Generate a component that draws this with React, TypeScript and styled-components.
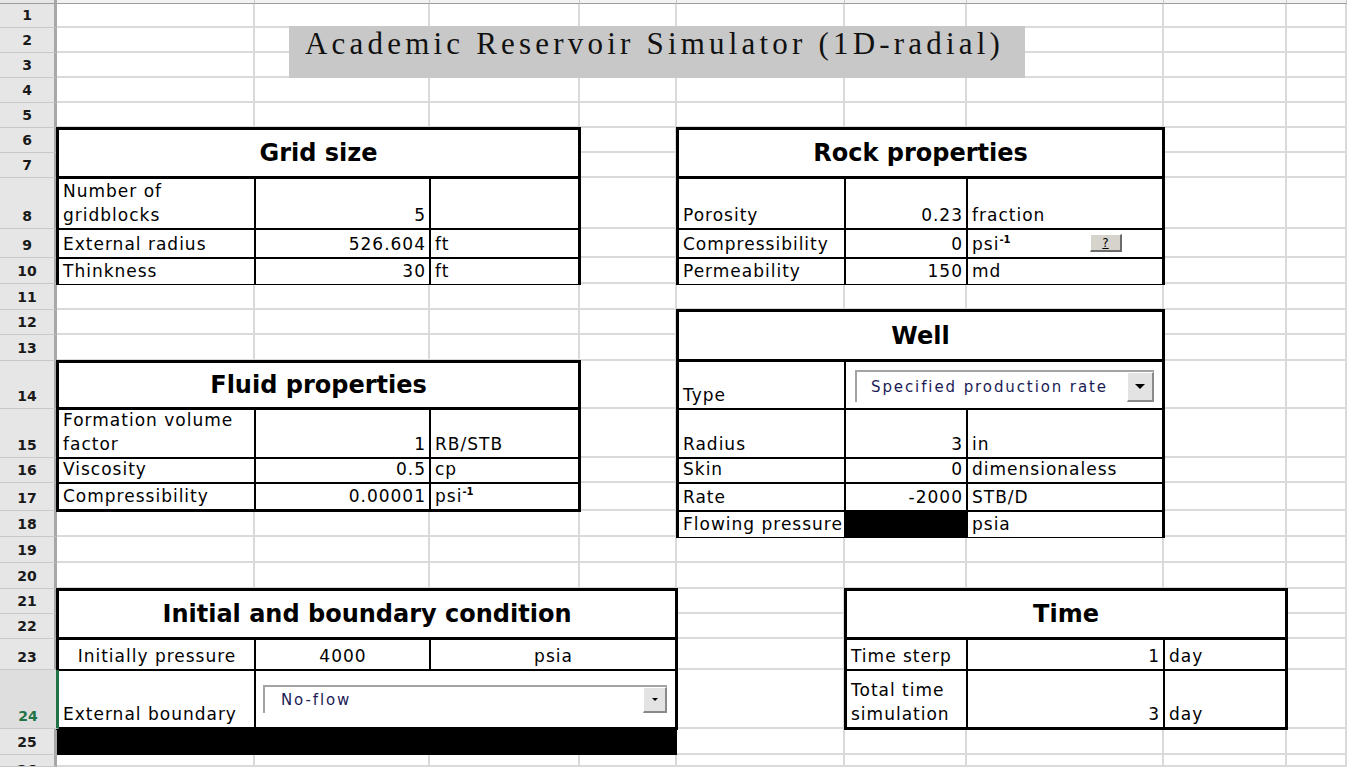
import React from 'react';
import styled, { createGlobalStyle } from 'styled-components';

const GlobalStyle = createGlobalStyle`
  html, body { margin: 0; padding: 0; overflow: hidden; background: #fff; }
  #root { width: 1347px; height: 767px; }
  * { box-sizing: border-box; }
`;

const COLS = [57, 198, 175, 150, 97, 168, 122, 197, 123];
const ROWS = [4, 24, 25, 25, 25, 25, 25, 25, 51, 29, 26, 26, 25, 26, 48, 49, 25, 28, 26, 26, 26, 25, 25, 31, 59, 26];

const tracks = (s: number[]) =>
  [s[0] - 3, ...s.slice(1, -1).map((v) => v - 2)].map((v) => `${v}px`).join(' ') + ' 1fr';

const Sheet = styled.div`
  display: grid;
  grid-template-columns: ${COLS.map((c) => `${c}px`).join(' ')} 1fr;
  grid-template-rows: ${ROWS.map((r) => `${r}px`).join(' ')} 1fr;
  width: 1347px;
  height: 767px;
  overflow: hidden;
  background: #fff;
  font-family: 'DejaVu Sans', Verdana, sans-serif;
`;

const ColHead = styled.div<{ $c: number }>`
  grid-row: 1;
  grid-column: ${(p) => p.$c};
  background: ${(p) => (p.$c === 1 ? '#e6e6e6' : '#f3f3f3')};
  border-bottom: 1px solid #9c9c9c;
  border-right: ${(p) => (p.$c === 1 ? '3px solid #a8a8a8' : '1px solid #c8c8c8')};
`;

const GridCell = styled.div<{ $r: number; $c: number }>`
  grid-row: ${(p) => p.$r};
  grid-column: ${(p) => p.$c};
  border-right: 2px solid #dadada;
  border-bottom: 2px solid #dadada;
`;

const RowHead = styled.div<{ $r: number; $active?: boolean; $cut?: boolean }>`
  grid-row: ${(p) => p.$r};
  grid-column: 1;
  display: flex;
  justify-content: center;
  align-items: ${(p) => (p.$cut ? 'flex-start' : 'flex-end')};
  padding: ${(p) => (p.$cut ? '5px 0 0' : '0 0 2px')};
  background: ${(p) => (p.$active ? '#dedede' : '#e6e6e6')};
  border-bottom: 1px solid #c8c8c8;
  border-right: 3px solid ${(p) => (p.$active ? '#217346' : '#a8a8a8')};
  margin-right: ${(p) => (p.$active ? '-2px' : '0')};
  z-index: ${(p) => (p.$active ? 3 : 0)};
  overflow: hidden;
  font: bold 14px/20px 'DejaVu Sans', sans-serif;
  color: ${(p) => (p.$active ? '#217346' : '#1a1a1a')};
`;

const TitleBox = styled.div`
  grid-area: 3 / 3 / 5 / 10;
  justify-self: start;
  align-self: start;
  margin: -2px 0 0 34px;
  width: 736px;
  height: 52px;
  padding-left: 16px;
  background: #c8c8c8;
  font-family: 'Liberation Serif', 'Times New Roman', serif;
  font-size: 31px;
  letter-spacing: 4.2px;
  color: #111;
  white-space: nowrap;
  z-index: 1;
`;

const Panel = styled.div<{ $area: string; $cols: string; $rows: string }>`
  grid-area: ${(p) => p.$area};
  margin: -1px;
  display: grid;
  grid-template-columns: ${(p) => p.$cols};
  grid-template-rows: ${(p) => p.$rows};
  gap: 2px;
  background: #000;
  border: 3px solid #000;
  z-index: 1;
`;

const HeadCell = styled.div`
  grid-column: 1 / -1;
  margin-bottom: 1px;
  background: #fff;
  display: flex;
  align-items: center;
  justify-content: center;
  font: bold 24px 'DejaVu Sans', sans-serif;
  color: #000;
`;

const Cell = styled.div<{ $span?: string; $align?: 'left' | 'right' | 'center'; $dark?: boolean; $top?: boolean }>`
  grid-column: ${(p) => p.$span ?? 'auto'};
  background: ${(p) => (p.$dark ? '#000' : '#fff')};
  display: flex;
  align-items: ${(p) => (p.$top ? 'flex-start' : 'flex-end')};
  justify-content: ${(p) => (p.$align === 'right' ? 'flex-end' : p.$align === 'center' ? 'center' : 'flex-start')};
  padding: 0 3px 1px 4px;
  min-width: 0;
  font-size: 17px;
  letter-spacing: 1px;
  line-height: 24px;
  color: #000;
  white-space: nowrap;
`;

const Lines = styled.span`
  white-space: normal;
`;

const Unit = styled.span`
  white-space: nowrap;
`;

const Sup = styled.sup`
  font-size: 10px;
  font-weight: bold;
  letter-spacing: 0;
  line-height: 0;
  vertical-align: 7px;
`;

const HelpButton = styled.div`
  margin: 0 37px 0 auto;
  align-self: center;
  width: 32px;
  height: 18px;
  display: flex;
  align-items: center;
  justify-content: center;
  background: #d6d3cc;
  border-top: 1px solid #fff;
  border-left: 1px solid #fff;
  border-right: 2px solid #6b6b6b;
  border-bottom: 2px solid #6b6b6b;
  font: 12px/12px 'DejaVu Sans', sans-serif;
  letter-spacing: 0;
  text-decoration: underline;
`;

const Combo = styled.div<{ $h: number; $m: string }>`
  flex: 1;
  align-self: flex-start;
  height: ${(p) => p.$h}px;
  margin: ${(p) => p.$m};
  display: flex;
  align-items: center;
  background: #fff;
  border-top: 2px solid #a3a3a3;
  border-left: 2px solid #a3a3a3;
`;

const ComboText = styled.span<{ $pad: number }>`
  flex: 1;
  padding-left: ${(p) => p.$pad}px;
  font-size: 15px;
  letter-spacing: 1.9px;
  color: #1b1b55;
`;

const ComboButton = styled.div<{ $w: number; $arrow: number }>`
  width: ${(p) => p.$w}px;
  align-self: stretch;
  display: flex;
  align-items: center;
  justify-content: center;
  background: #e3e3e3;
  border-top: 1px solid #fff;
  border-left: 1px solid #fff;
  border-right: 2px solid #8a8a8a;
  border-bottom: 2px solid #8a8a8a;
  &::after {
    content: '';
    border-left: ${(p) => p.$arrow}px solid transparent;
    border-right: ${(p) => p.$arrow}px solid transparent;
    border-top: ${(p) => p.$arrow}px solid #000;
  }
`;

const BlackBar = styled.div`
  grid-area: 26 / 2 / 27 / 6;
  background: #000;
  z-index: 1;
`;

type Row = [React.ReactNode, React.ReactNode, React.ReactNode];

const psi = (
  <Unit>
    psi<Sup>-1</Sup>
  </Unit>
);

const ValueRows = ({ rows }: { rows: Row[] }) => (
  <>
    {rows.map(([label, value, unit], i) => (
      <React.Fragment key={i}>
        <Cell>{label}</Cell>
        <Cell $align="right" $dark={value === null}>
          {value}
        </Cell>
        <Cell>{unit}</Cell>
      </React.Fragment>
    ))}
  </>
);

export default function App() {
  const bg: React.ReactNode[] = [];
  for (let c = 1; c <= 10; c++) bg.push(<ColHead key={`h${c}`} $c={c} />);
  for (let r = 2; r <= 27; r++) {
    const n = r - 1;
    bg.push(
      <RowHead key={`r${r}`} $r={r} $active={n === 24} $cut={n === 26}>
        {n}
      </RowHead>
    );
    for (let c = 2; c <= 10; c++) bg.push(<GridCell key={`g${r}-${c}`} $r={r} $c={c} />);
  }

  return (
    <>
      <GlobalStyle />
      <Sheet>
        {bg}
        <TitleBox>Academic Reservoir Simulator (1D-radial)</TitleBox>

        <Panel $area="7 / 2 / 12 / 5" $cols={tracks([198, 175, 150])} $rows={tracks([50, 51, 29, 26])}>
          <HeadCell>Grid size</HeadCell>
          <ValueRows
            rows={[
              [<Lines>Number of<br />gridblocks</Lines>, '5', ''],
              ['External radius', '526.604', 'ft'],
              ['Thinkness', '30', 'ft'],
            ]}
          />
        </Panel>

        <Panel $area="7 / 6 / 12 / 9" $cols={tracks([168, 122, 197])} $rows={tracks([50, 51, 29, 26])}>
          <HeadCell>Rock properties</HeadCell>
          <Cell>Porosity</Cell>
          <Cell $align="right">0.23</Cell>
          <Cell>fraction</Cell>
          <Cell>Compressibility</Cell>
          <Cell $align="right">0</Cell>
          <Cell>
            {psi}
            <HelpButton>?</HelpButton>
          </Cell>
          <Cell>Permeability</Cell>
          <Cell $align="right">150</Cell>
          <Cell>md</Cell>
        </Panel>

        <Panel $area="13 / 6 / 20 / 9" $cols={tracks([168, 122, 197])} $rows={tracks([51, 48, 49, 25, 28, 26])}>
          <HeadCell>Well</HeadCell>
          <Cell>Type</Cell>
          <Cell $span="2 / 4" $top>
            <Combo $h={32} $m="8px 5px 0 5px">
              <ComboText $pad={14}>Specified production rate</ComboText>
              <ComboButton $w={27} $arrow={5} />
            </Combo>
          </Cell>
          <ValueRows
            rows={[
              ['Radius', '3', 'in'],
              ['Skin', '0', 'dimensionaless'],
              ['Rate', '-2000', 'STB/D'],
              ['Flowing pressure', null, 'psia'],
            ]}
          />
        </Panel>

        <Panel $area="15 / 2 / 19 / 5" $cols={tracks([198, 175, 150])} $rows={tracks([48, 49, 25, 28])}>
          <HeadCell>Fluid properties</HeadCell>
          <ValueRows
            rows={[
              [<Lines>Formation volume<br />factor</Lines>, '1', 'RB/STB'],
              ['Viscosity', '0.5', 'cp'],
              ['Compressibility', '0.00001', psi],
            ]}
          />
        </Panel>

        <Panel $area="22 / 2 / 26 / 6" $cols={tracks([198, 175, 150, 97])} $rows={tracks([50, 31, 59])}>
          <HeadCell>Initial and boundary condition</HeadCell>
          <Cell $align="center">Initially pressure</Cell>
          <Cell $align="center">4000</Cell>
          <Cell $align="center" $span="3 / 5">psia</Cell>
          <Cell>External boundary</Cell>
          <Cell $span="2 / 5" $top>
            <Combo $h={28} $m="14px 5px 0 3px">
              <ComboText $pad={16}>No-flow</ComboText>
              <ComboButton $w={24} $arrow={3} />
            </Combo>
          </Cell>
        </Panel>
        <BlackBar />

        <Panel $area="22 / 7 / 26 / 10" $cols={tracks([122, 197, 123])} $rows={tracks([50, 31, 59])}>
          <HeadCell>Time</HeadCell>
          <ValueRows
            rows={[
              ['Time sterp', '1', 'day'],
              [<Lines>Total time<br />simulation</Lines>, '3', 'day'],
            ]}
          />
        </Panel>
      </Sheet>
    </>
  );
}
